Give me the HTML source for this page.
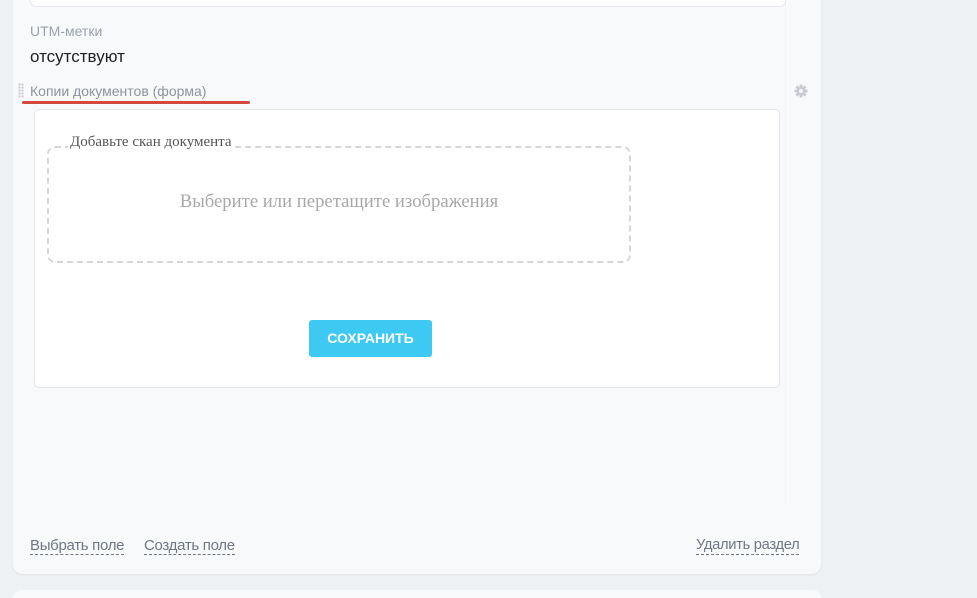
<!DOCTYPE html>
<html style="overflow:hidden;height:598px"><head><meta charset="utf-8"><style>
body{margin:0;width:977px;height:598px;background:#eef1f4;position:relative;overflow:hidden;font-family:"Liberation Sans",sans-serif}
.a{position:absolute}
.card{left:13px;top:-20px;width:808px;height:594px;background:#f8f9fb;border-radius:10px;box-shadow:0 1px 2px rgba(0,0,0,.06)}
.lnk{font-size:15px;color:#6f7782;border-bottom:1px dashed #6f7782;line-height:17px;letter-spacing:-0.3px}
</style></head><body>
<div class="a card"></div>
<div class="a" style="left:785px;top:0;width:1px;height:505px;background:#f1f3f5"></div>
<div class="a" style="left:30px;top:-10px;width:754px;height:15px;background:#fff;border:1px solid #e6e9ed;border-radius:6px"></div>
<div class="a" style="left:30px;top:23px;font-size:14px;color:#9aa1aa">UTM-метки</div>
<div class="a" style="left:30px;top:47px;font-size:17px;color:#222">отсутствуют</div>
<div class="a" style="left:18px;top:83px;width:6px;height:15px;background:radial-gradient(circle,#c7cbd0 1px,transparent 1.3px) 0 0/3px 3px"></div>
<div class="a" style="left:30px;top:83px;font-size:14px;color:#8d949d">Копии документов (форма)</div>
<div class="a" style="left:22px;top:101px;width:228px;height:3px;background:#d4493b;border-radius:2px"></div>
<svg class="a" style="left:794px;top:84px" width="14" height="14" viewBox="0 0 14 14"><g fill="#c8ccd1"><circle cx="7" cy="7" r="4.6"/><rect x="5.6" y="0.5" width="2.8" height="13"/><rect x="0.5" y="5.6" width="13" height="2.8"/><rect x="5.6" y="0.5" width="2.8" height="13" transform="rotate(45 7 7)"/><rect x="5.6" y="0.5" width="2.8" height="13" transform="rotate(-45 7 7)"/></g><circle cx="7" cy="7" r="2" fill="#f8f9fb"/></svg>
<div class="a" style="left:34px;top:109px;width:744px;height:277px;background:#fff;border:1px solid #e3e6ea;border-radius:5px"></div>
<div class="a" style="left:47px;top:146px;width:580px;height:113px;border:2px dashed #d6d6d6;border-radius:8px"></div>
<div class="a" style="left:68px;top:134px;padding:0 2px;background:#fff;font-family:'Liberation Serif',serif;font-size:15px;color:#555">Добавьте скан документа</div>
<div class="a" style="left:47px;top:191px;width:584px;text-align:center;font-family:'Liberation Serif',serif;font-size:18.7px;color:#a8a8a8">Выберите или перетащите изображения</div>
<div class="a" style="left:309px;top:320px;width:123px;height:37px;background:#3ec9f2;border-radius:3px;color:#fff;font-weight:bold;font-size:14px;text-align:center;line-height:37px">СОХРАНИТЬ</div>
<div class="a lnk" style="left:30px;top:537px">Выбрать поле</div>
<div class="a lnk" style="left:144px;top:537px">Создать поле</div>
<div class="a lnk" style="left:696px;top:537px;font-size:14.7px">Удалить раздел</div>
<div class="a" style="left:13px;top:590px;width:808px;height:8px;background:#f8f9fb;border-radius:10px 10px 0 0"></div>
</body></html>
